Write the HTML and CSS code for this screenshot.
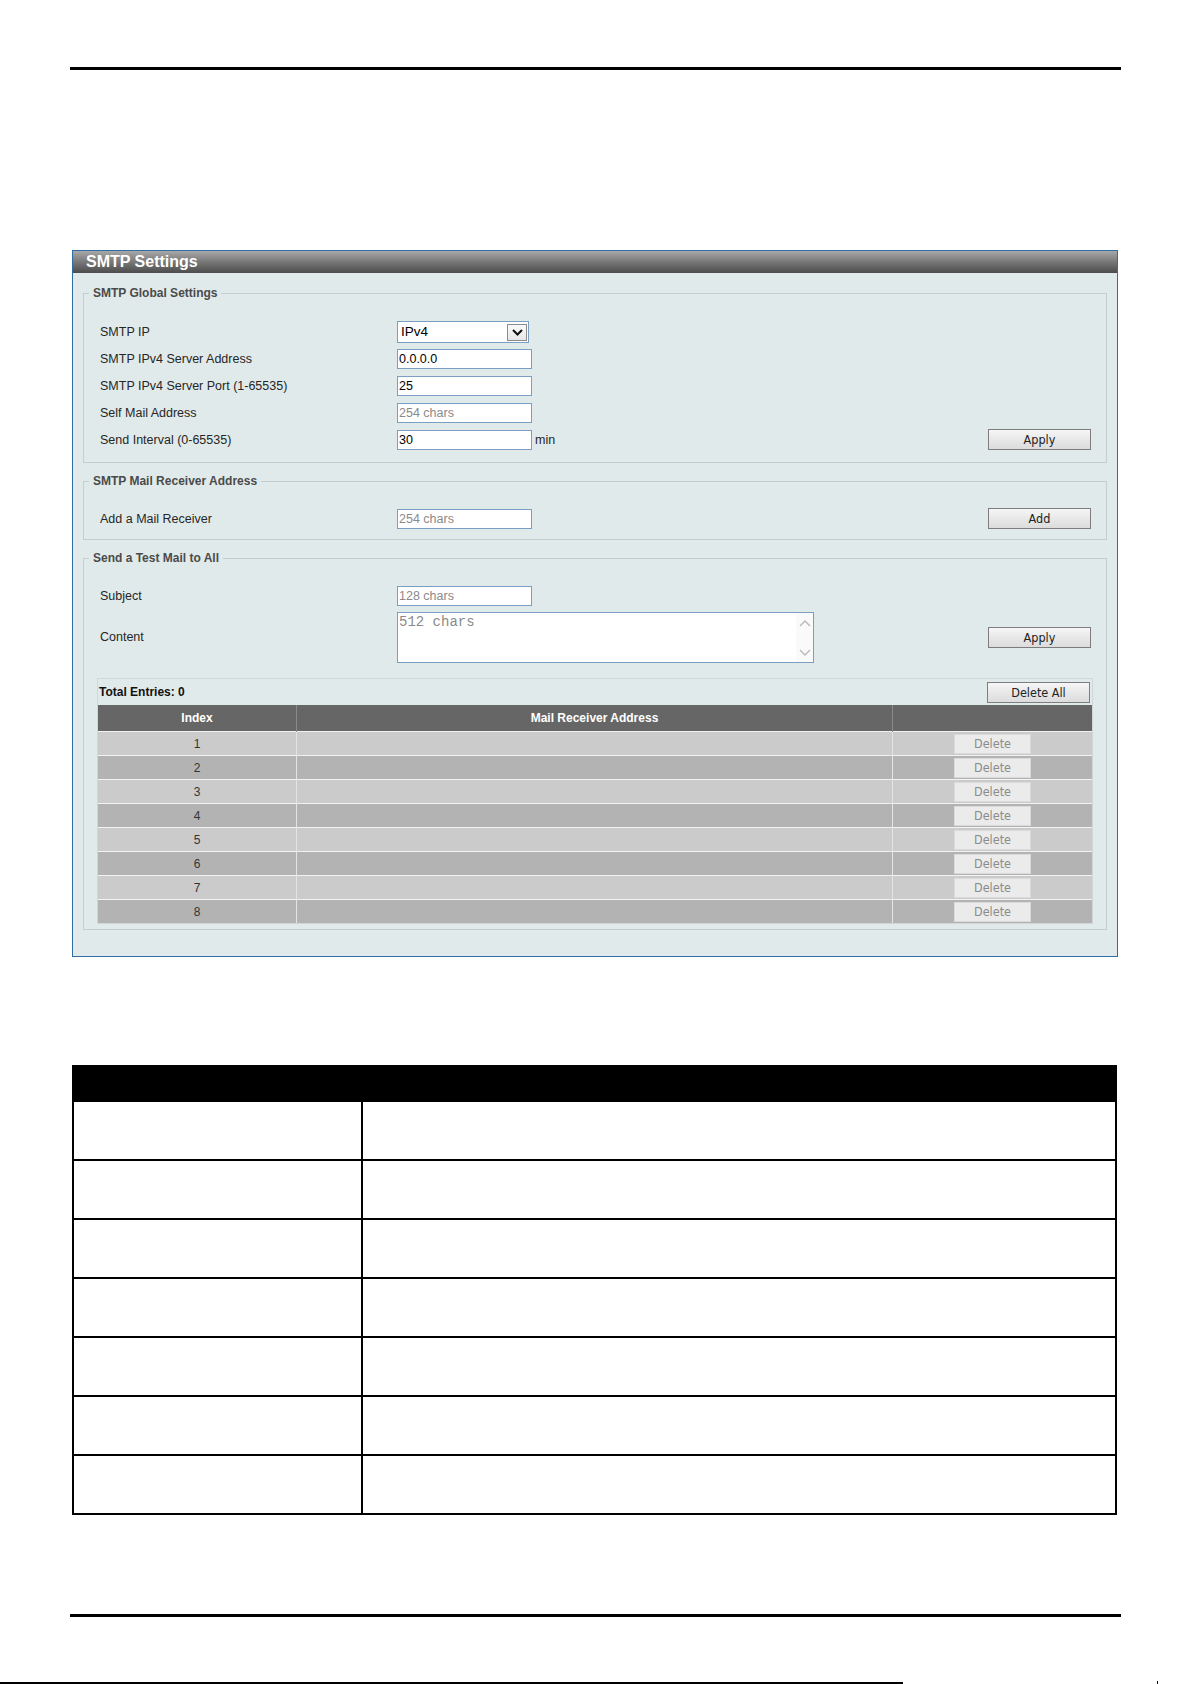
FILE: index.html
```html
<!DOCTYPE html>
<html>
<head>
  <meta charset="utf-8">
  <link rel="stylesheet" href="styles.css">
</head>
<body>

<div class="page">
  <div class="rule rule-top"></div>

  <div class="panel">
    <div class="panel-title">SMTP Settings</div>
    <div class="panel-body">

      <fieldset class="group group-global">
        <legend>SMTP Global Settings</legend>
        <div class="row">
          <label class="label">SMTP IP</label>
          <div class="select-wrap">
            <select class="select" name="smtp_ip">
              <option value="ipv4">IPv4</option>
              <option value="ipv6">IPv6</option>
            </select>
            <span class="select-arrow">
              <svg width="11" height="7" viewBox="0 0 11 7"><path d="M1 1 L5.5 5.5 L10 1" fill="none" stroke="#111" stroke-width="2"/></svg>
            </span>
          </div>
        </div>
        <div class="row">
          <label class="label">SMTP IPv4 Server Address</label>
          <input class="text" type="text" name="server_address" value="0.0.0.0">
        </div>
        <div class="row">
          <label class="label">SMTP IPv4 Server Port (1-65535)</label>
          <input class="text" type="text" name="server_port" value="25">
        </div>
        <div class="row">
          <label class="label">Self Mail Address</label>
          <input class="text" type="text" name="self_mail" placeholder="254 chars">
        </div>
        <div class="row">
          <label class="label">Send Interval (0-65535)</label>
          <input class="text" type="text" name="send_interval" value="30">
          <span class="unit">min</span>
          <button class="btn btn-right">Apply</button>
        </div>
      </fieldset>

      <fieldset class="group">
        <legend>SMTP Mail Receiver Address</legend>
        <div class="row">
          <label class="label">Add a Mail Receiver</label>
          <input class="text" type="text" name="receiver" placeholder="254 chars">
          <button class="btn btn-right">Add</button>
        </div>
      </fieldset>

      <fieldset class="group group-test">
        <legend>Send a Test Mail to All</legend>
        <div class="row">
          <label class="label">Subject</label>
          <input class="text" type="text" name="subject" placeholder="128 chars">
        </div>
        <div class="row row-content">
          <label class="label">Content</label>
          <div class="area-box">
            <textarea class="area" name="content" placeholder="512 chars"></textarea>
            <div class="area-scroll">
              <svg width="12" height="8" viewBox="0 0 12 8"><path d="M1 7 L6 2 L11 7" fill="none" stroke="#b9b9b9" stroke-width="1.4"/></svg>
              <svg width="12" height="8" viewBox="0 0 12 8"><path d="M1 1 L6 6 L11 1" fill="none" stroke="#b9b9b9" stroke-width="1.4"/></svg>
            </div>
          </div>
          <button class="btn btn-right">Apply</button>
        </div>

        <div class="entries">
          <div class="entries-bar">
            <span class="entries-total">Total Entries: 0</span>
            <button class="btn">Delete All</button>
          </div>
          <table class="grid">
            <thead>
              <tr>
                <th class="col-index">Index</th>
                <th class="col-addr">Mail Receiver Address</th>
                <th class="col-action"></th>
              </tr>
            </thead>
            <tbody>
              <tr><td>1</td><td></td><td><button class="btn-del" disabled>Delete</button></td></tr>
              <tr><td>2</td><td></td><td><button class="btn-del" disabled>Delete</button></td></tr>
              <tr><td>3</td><td></td><td><button class="btn-del" disabled>Delete</button></td></tr>
              <tr><td>4</td><td></td><td><button class="btn-del" disabled>Delete</button></td></tr>
              <tr><td>5</td><td></td><td><button class="btn-del" disabled>Delete</button></td></tr>
              <tr><td>6</td><td></td><td><button class="btn-del" disabled>Delete</button></td></tr>
              <tr><td>7</td><td></td><td><button class="btn-del" disabled>Delete</button></td></tr>
              <tr><td>8</td><td></td><td><button class="btn-del" disabled>Delete</button></td></tr>
            </tbody>
          </table>
        </div>
      </fieldset>

    </div>
  </div>

  <table class="doc">
    <thead>
      <tr><th class="doc-param"></th><th></th></tr>
    </thead>
    <tbody>
      <tr><td></td><td></td></tr>
      <tr><td></td><td></td></tr>
      <tr><td></td><td></td></tr>
      <tr><td></td><td></td></tr>
      <tr><td></td><td></td></tr>
      <tr><td></td><td></td></tr>
      <tr><td></td><td></td></tr>
    </tbody>
  </table>

  <div class="rule rule-bottom"></div>
</div>

<div class="footer">
  <span class="footer-line"></span>
  <span class="footer-dot"></span>
</div>

</body>
</html>
```

FILE: styles.css
```css
html, body {
  margin: 0;
  padding: 0;
  background: #fff;
}

body {
  font-family: "Liberation Sans", Arial, sans-serif;
  overflow: hidden;
}

.page {
  display: flow-root;
  width: 1192px;
  height: 1681px;
}

.rule {
  margin-left: 70px;
  width: 1051px;
  height: 3px;
  background: #000;
}

.rule-top {
  margin-top: 67px;
}

.rule-bottom {
  margin-top: 99px;
}

/* settings panel */
.panel {
  box-sizing: border-box;
  margin-top: 180px;
  margin-left: 72px;
  width: 1046px;
  border: 1px solid #2e6ea6;
  background: #e1eaea;
}

.panel-title {
  height: 22px;
  line-height: 22px;
  padding-left: 13px;
  color: #fff;
  font-weight: bold;
  font-size: 16px;
  background: linear-gradient(to bottom, #a8a8a8 0%, #7c7c7c 45%, #4c4c4c 100%);
}

.panel-body {
  padding: 13px 10px 26px 10px;
}

.group {
  margin: 0;
  padding: 17px 15px 7px 16px;
  border: 1px solid #c4cece;
}

.group + .group {
  margin-top: 11px;
}

.group-global {
  padding-top: 18px;
  padding-bottom: 9px;
}

.group-test {
  padding-bottom: 5px;
}

.group legend {
  margin-left: -11px;
  padding: 0 4px;
  font-size: 12px;
  line-height: 14px;
  font-weight: bold;
  color: #4a4a4a;
}

.row {
  display: flex;
  align-items: center;
  height: 27px;
}

.label {
  width: 297px;
  font-size: 12.5px;
  color: #262626;
}

.text {
  box-sizing: border-box;
  width: 135px;
  height: 20px;
  margin: 0;
  padding: 0 1px;
  border: 1px solid #7b9fc2;
  background: #fff;
  font-family: "Liberation Sans", Arial, sans-serif;
  font-size: 12.5px;
  color: #000;
  outline: none;
}

.text::placeholder,
.area::placeholder {
  color: #8a8a8a;
}

.unit {
  margin-left: 3px;
  font-size: 12.5px;
  color: #262626;
}

/* select with its own drop button */
.select-wrap {
  position: relative;
  width: 132px;
  height: 22px;
}

.select {
  appearance: none;
  -webkit-appearance: none;
  box-sizing: border-box;
  width: 132px;
  height: 22px;
  margin: 0;
  padding: 0 0 0 3px;
  border: 1px solid #7b9fc2;
  border-radius: 0;
  background: #fff;
  font-family: "Liberation Sans", Arial, sans-serif;
  font-size: 13.5px;
  color: #000;
  outline: none;
}

.select-arrow {
  position: absolute;
  top: 3px;
  right: 2px;
  box-sizing: border-box;
  width: 20px;
  height: 17px;
  border: 1px solid #8c8c8c;
  background: linear-gradient(#fbfbfb, #e6e6e6);
  display: flex;
  align-items: center;
  justify-content: center;
  pointer-events: none;
}

.btn {
  box-sizing: border-box;
  width: 103px;
  height: 21px;
  margin: 0;
  padding: 0;
  border: 1px solid #7d7d7d;
  border-radius: 0;
  background: linear-gradient(to bottom, #f6f6f6 0%, #e8e8e8 50%, #dcdcdc 100%);
  font-family: "DejaVu Sans Condensed", "DejaVu Sans", sans-serif;
  font-size: 12.5px;
  color: #222;
}

.btn-right {
  margin-left: auto;
}

/* test mail content */
.row-content {
  height: 50px;
  margin-top: 3px;
}

.area-box {
  box-sizing: border-box;
  display: flex;
  width: 417px;
  height: 51px;
  border: 1px solid #7b9fc2;
  background: #fff;
}

.area {
  flex: 1;
  margin: 0;
  padding: 1px 1px;
  border: none;
  resize: none;
  overflow: hidden;
  font-family: "Liberation Mono", "Courier New", monospace;
  font-size: 14px;
  line-height: 16px;
  outline: none;
}

.area-scroll {
  width: 17px;
  display: flex;
  flex-direction: column;
  justify-content: space-between;
  align-items: center;
  padding: 6px 0 5px;
  background: #fafafa;
}

/* receiver list */
.entries {
  margin: 16px -2px 0 -3px;
  border: 1px solid #cfd7d7;
}

.entries-bar {
  display: flex;
  align-items: center;
  justify-content: space-between;
  height: 26px;
  padding: 0 2px 0 1px;
}

.entries-total {
  font-size: 12px;
  font-weight: bold;
  color: #111;
}

.grid {
  width: 100%;
  border-collapse: collapse;
  font-size: 12px;
}

.grid th {
  height: 26px;
  padding: 0;
  background: #666;
  color: #fff;
  font-weight: bold;
  border-left: 1px solid #8a8a8a;
}

.grid th:first-child {
  border-left: none;
}

.col-index {
  width: 198px;
}

.col-action {
  width: 199px;
}

.grid td {
  height: 23px;
  padding: 0;
  text-align: center;
  color: #333;
  border-top: 1px solid #f2f2f2;
  border-left: 1px solid #e4e4e4;
}

.grid td:first-child {
  border-left: none;
}

.grid tbody tr:nth-child(odd) td {
  background: #cbcbcb;
}

.grid tbody tr:nth-child(even) td {
  background: #b3b3b3;
}

.btn-del {
  box-sizing: border-box;
  display: block;
  margin: 0 auto;
  width: 77px;
  height: 20px;
  padding: 0;
  border: 1px solid #dadada;
  background: #ebebeb;
  font-family: "DejaVu Sans Condensed", "DejaVu Sans", sans-serif;
  font-size: 12.5px;
  color: #8c8c8c;
}

/* parameter description table */
.doc {
  margin-top: 108px;
  margin-left: 72px;
  width: 1045px;
  border-collapse: collapse;
}

.doc th {
  height: 33px;
  padding: 0;
  background: #000;
  border: 2px solid #000;
}

.doc-param {
  width: 287px;
}

.doc td {
  height: 57px;
  padding: 0;
  border: 2px solid #000;
}

.footer {
  display: flex;
  align-items: flex-end;
  height: 3px;
}

.footer-line {
  width: 903px;
  height: 2px;
  background: #000;
}

.footer-dot {
  margin-left: 254px;
  width: 1px;
  height: 3px;
  background: #000;
}
```
